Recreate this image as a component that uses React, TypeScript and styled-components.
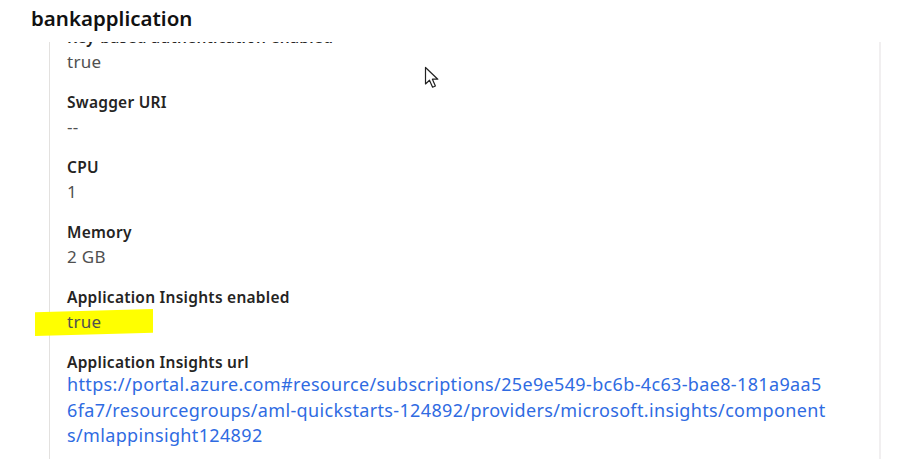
import { useLayoutEffect, useRef } from 'react';
import styled, { createGlobalStyle } from 'styled-components';

const GlobalStyle = createGlobalStyle`
  html, body {
    margin: 0;
    padding: 0;
    background: #ffffff;
    overflow: hidden;
  }
  body {
    font-family: "Noto Sans", "Open Sans", Arial, sans-serif;
  }
`;

const Page = styled.div`
  position: relative;
  width: 898px;
  height: 459px;
  display: flex;
  flex-direction: column;
  overflow: hidden;
`;

const Title = styled.h2`
  margin: 0;
  padding: 5px 0 0 31px;
  height: 42px;
  flex: none;
  box-sizing: border-box;
  font-size: 20.5px;
  font-weight: 600;
  line-height: 26px;
  color: #111111;
`;

const Scroller = styled.div`
  flex: 1;
  overflow: hidden;
`;

const Sheet = styled.div`
  margin-left: 49px;
  width: 832px;
  min-height: 520px;
  box-sizing: border-box;
  border-left: 1px solid #e3e1df;
  border-right: 2px solid #f1eff0;
`;

const Fields = styled.dl`
  margin: 0;
  padding: 16px 40px 40px 17px;
`;

const Field = styled.div`
  margin-bottom: 15px;
`;

const Label = styled.dt`
  font-size: 15.5px;
  font-weight: 600;
  line-height: 20px;
  letter-spacing: 0.25px;
  color: #252423;
`;

const Value = styled.dd<{ $marked?: boolean }>`
  position: relative;
  margin: 0;
  font-size: 17px;
  line-height: 30px;
  letter-spacing: 0.3px;
  color: #505050;

  ${({ $marked }) =>
    $marked &&
    `
    &::before {
      content: '';
      position: absolute;
      left: -32px;
      top: 2px;
      width: 118px;
      height: 27px;
      background: #ffff00;
      clip-path: polygon(0 12%, 100% 0, 100% 88%, 0 100%);
      z-index: 0;
    }
  `}

  & > span {
    position: relative;
    z-index: 1;
  }
`;

const LinkBlock = styled.dd`
  margin: 0;
`;

const Link = styled.a`
  display: block;
  font-size: 18px;
  line-height: 25.5px;
  letter-spacing: 0.35px;
  white-space: nowrap;
  color: #2f6be2;
  text-decoration: none;
`;

const Cursor = styled.svg`
  position: absolute;
  left: 424px;
  top: 66px;
  width: 18px;
  height: 24px;
`;

const fields = [
  { label: 'Key-based authentication enabled', value: 'true' },
  { label: 'Swagger URI', value: '--' },
  { label: 'CPU', value: '1' },
  { label: 'Memory', value: '2 GB' },
  { label: 'Application Insights enabled', value: 'true', marked: true },
];

const urlLines = [
  'https://portal.azure.com#resource/subscriptions/25e9e549-bc6b-4c63-bae8-181a9aa5',
  '6fa7/resourcegroups/aml-quickstarts-124892/providers/microsoft.insights/component',
  's/mlappinsight124892',
];

export default function App() {
  const scrollRef = useRef<HTMLDivElement>(null);

  // the panel is shown scrolled a little, the first label is half hidden
  useLayoutEffect(() => {
    if (scrollRef.current) scrollRef.current.scrollTop = 31;
  }, []);

  return (
    <Page>
      <GlobalStyle />
      <Title>bankapplication</Title>
      <Scroller ref={scrollRef}>
        <Sheet>
          <Fields>
            {fields.map((f) => (
              <Field key={f.label}>
                <Label>{f.label}</Label>
                <Value $marked={f.marked}>
                  <span>{f.value}</span>
                </Value>
              </Field>
            ))}
            <Field>
              <Label>Application Insights url</Label>
              <LinkBlock>
                {urlLines.map((line) => (
                  <Link key={line} href="#">
                    {line}
                  </Link>
                ))}
              </LinkBlock>
            </Field>
          </Fields>
        </Sheet>
      </Scroller>
      <Cursor viewBox="0 0 18 24">
        <path
          d="M1.5 1.5 L1.5 18 L5.5 14.2 L8.6 21.2 L11.4 20 L8.4 13.2 L13.8 13.2 Z"
          fill="#ffffff"
          stroke="#222222"
          strokeWidth="1.2"
          strokeLinejoin="round"
        />
      </Cursor>
    </Page>
  );
}
